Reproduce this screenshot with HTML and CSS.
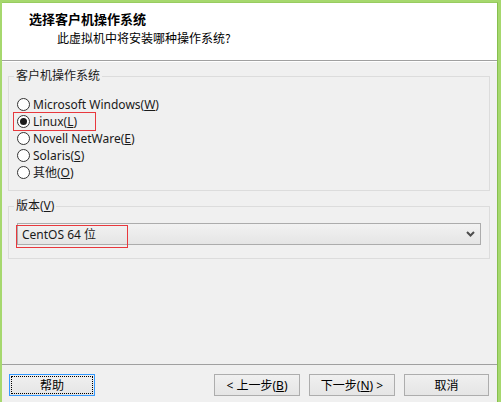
FILE: index.html
```html
<!DOCTYPE html>
<html lang="zh-CN">
<head>
  <meta charset="UTF-8">
  <title>新建虚拟机向导</title>
  <link rel="stylesheet" href="styles.css">
</head>
<body>
  <div class="dialog">
    <div class="header">
      <div class="title">选择客户机操作系统</div>
      <div class="subtitle">此虚拟机中将安装哪种操作系统?</div>
    </div>

    <div class="main">
      <fieldset class="group">
        <legend>客户机操作系统</legend>
        <label class="radio"><span class="circle"></span>Microsoft Windows(<u>W</u>)</label>
        <label class="radio checked"><span class="circle"></span>Linux(<u>L</u>)<span class="mark mark-linux"></span></label>
        <label class="radio"><span class="circle"></span>Novell NetWare(<u>E</u>)</label>
        <label class="radio"><span class="circle"></span>Solaris(<u>S</u>)</label>
        <label class="radio"><span class="circle"></span>其他(<u>O</u>)</label>
      </fieldset>

      <fieldset class="group version">
        <legend>版本(<u>V</u>)</legend>
        <div class="combo-wrap">
          <div class="combo">
            <span class="combo-text">CentOS 64 位</span>
            <svg class="combo-arrow" width="9" height="6" viewBox="0 0 9 6">
              <polyline points="1,1 4.5,4.5 8,1" fill="none" stroke="#4d4d4d" stroke-width="2"/>
            </svg>
          </div>
          <span class="mark mark-combo"></span>
        </div>
      </fieldset>
    </div>

    <div class="footer">
      <button class="btn focused">帮助</button>
      <div class="nav">
        <button class="btn">&lt; 上一步(<u>B</u>)</button>
        <button class="btn">下一步(<u>N</u>) &gt;</button>
        <button class="btn">取消</button>
      </div>
    </div>
  </div>
</body>
</html>
```

FILE: styles.css
```css
* {
  box-sizing: border-box;
}
body {
  margin: 0;
  padding: 2px 3px 0 2px;
  background: #a6d86e;
  font-family: 'Noto Sans', 'Noto Sans CJK SC', sans-serif;
  font-size: 12px;
  color: #1a1a1a;
  overflow: hidden;
}
.dialog {
  height: 400px;
  display: flex;
  flex-direction: column;
  background: #f0f0f0;
  border-top: 1px solid #98cc60;
  border-right: 1px solid #86bf4e;
}
.header {
  height: 58px;
  background: #fff;
  border-bottom: 1px solid #a0a0a0;
  padding: 7px 0 0 27px;
}
.title {
  font-family: 'Noto Sans CJK SC', sans-serif;
  font-size: 13px;
  font-weight: bold;
  line-height: 17px;
  color: #000;
}
.subtitle {
  margin: 3px 0 0 28px;
  font-family: 'Noto Sans CJK SC', sans-serif;
  line-height: 16px;
  color: #000;
}
.main {
  flex: 1;
  padding: 0 7px 0 6px;
  border-top: 1px solid #fff;
}
.group {
  margin: 6px 0 0;
  padding: 12px 8px 9px;
  border: 1px solid #dcdcdc;
  min-width: 0;
}
.group legend {
  margin-left: -3px;
  padding: 0 2px;
  line-height: 16px;
}
.radio {
  position: relative;
  display: flex;
  align-items: center;
  height: 17px;
  line-height: 17px;
}
.circle {
  width: 13px;
  height: 13px;
  margin-right: 3px;
  border: 1px solid #333;
  border-radius: 50%;
  background: #fff;
  display: flex;
  align-items: center;
  justify-content: center;
}
.checked .circle::after {
  content: "";
  width: 7px;
  height: 7px;
  border-radius: 50%;
  background: #1a1a1a;
}
.mark {
  position: absolute;
  z-index: 1;
  border: 1px solid #e8383d;
}
.mark-linux {
  left: -4px;
  top: -1px;
  width: 83px;
  height: 19px;
}
.version {
  margin-top: 7px;
  padding-top: 9px;
  padding-bottom: 13px;
}
.combo-wrap {
  position: relative;
}
.combo {
  height: 22px;
  display: flex;
  align-items: center;
  justify-content: space-between;
  padding: 0 5px 0 4px;
  border: 1px solid #acacac;
  background: linear-gradient(#f2f2f2, #e5e5e5);
}
.mark-combo {
  left: -1px;
  top: 2px;
  width: 112px;
  height: 23px;
}
.footer {
  height: 38px;
  border-top: 1px solid #a0a0a0;
  padding: 9px 8px 0 7px;
  display: flex;
  align-items: flex-start;
}
.nav {
  margin-left: auto;
  display: flex;
  gap: 9px;
}
.btn {
  width: 86px;
  height: 22px;
  padding: 0;
  font: inherit;
  color: #000;
  border: 1px solid #adadad;
  background: linear-gradient(#f0f0f0, #e5e5e5);
}
.nav .btn:last-child {
  width: 85px;
}
.btn.focused {
  border-color: #3399ff;
  outline: 1px dotted #000;
  outline-offset: -3px;
}
```
